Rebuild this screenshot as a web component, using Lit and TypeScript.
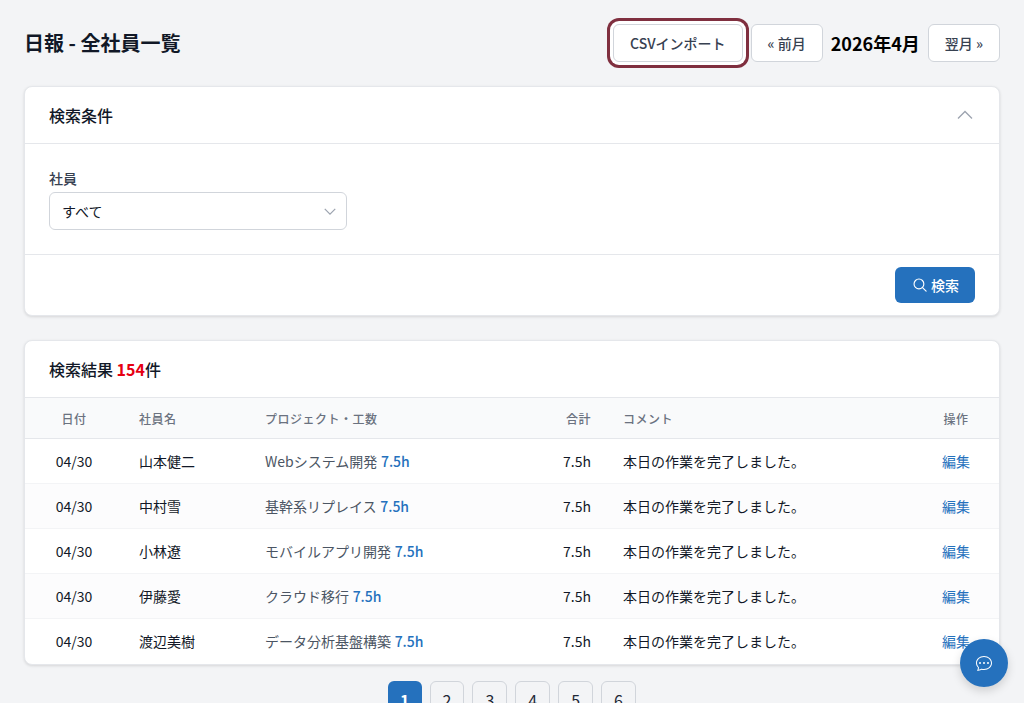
import { LitElement, css, html } from 'lit'
import { customElement } from 'lit/decorators.js'

const rows = [
  { date: '04/30', name: '山本健二', project: 'Webシステム開発', hours: '7.5h' },
  { date: '04/30', name: '中村雪', project: '基幹系リプレイス', hours: '7.5h' },
  { date: '04/30', name: '小林遼', project: 'モバイルアプリ開発', hours: '7.5h' },
  { date: '04/30', name: '伊藤愛', project: 'クラウド移行', hours: '7.5h' },
  { date: '04/30', name: '渡辺美樹', project: 'データ分析基盤構築', hours: '7.5h' },
]

@customElement('app-root')
export class AppRoot extends LitElement {
  static styles = css`
    :host {
      display: block;
      min-height: 703px;
      background: #f3f4f6;
      color: #111827;
      font-family: "Noto Sans CJK JP", "Noto Sans", sans-serif;
      font-size: 14px;
    }
    .page {
      display: flex;
      flex-direction: column;
      gap: 24px;
      padding: 24px;
    }
    .top {
      display: flex;
      align-items: center;
      justify-content: space-between;
    }
    h1 {
      margin: 0;
      font-size: 20px;
      line-height: 38px;
      font-weight: 700;
      color: #111827;
    }
    .actions {
      display: flex;
      align-items: center;
      gap: 8px;
    }
    .btn {
      display: flex;
      align-items: center;
      height: 38px;
      box-sizing: border-box;
      padding: 0 16px;
      border: 1px solid #d1d5db;
      border-radius: 6px;
      background: #fff;
      color: #374151;
      font-size: 14px;
      font-weight: 500;
    }
    .focused {
      box-shadow: 0 0 0 3px #fff, 0 0 0 6px #7f2f3f;
    }
    .month {
      font-size: 18px;
      font-weight: 700;
      color: #000;
    }
    .card {
      background: #fff;
      border: 1px solid #e5e7eb;
      border-radius: 8px;
      box-shadow: 0 1px 3px rgba(0, 0, 0, 0.12);
      overflow: hidden;
    }
    .card-head {
      display: flex;
      align-items: center;
      justify-content: space-between;
      height: 56px;
      padding: 0 24px;
      font-size: 16px;
      font-weight: 500;
      color: #111827;
      border-bottom: 1px solid #e5e7eb;
    }
    .chev-up {
      width: 16px;
      height: 16px;
      margin-right: 2px;
      color: #9ca3af;
    }
    .card-body {
      padding: 24px;
      border-bottom: 1px solid #e5e7eb;
    }
    .label {
      font-size: 14px;
      font-weight: 500;
      line-height: 20px;
      color: #374151;
      margin-bottom: 4px;
    }
    .select {
      display: flex;
      align-items: center;
      justify-content: space-between;
      box-sizing: border-box;
      width: 298px;
      height: 38px;
      padding: 0 9px 0 12px;
      border: 1px solid #d1d5db;
      border-radius: 6px;
      font-size: 14px;
      color: #111827;
    }
    .select svg {
      width: 14px;
      height: 14px;
      color: #9ca3af;
    }
    .card-foot {
      display: flex;
      justify-content: flex-end;
      padding: 12px 24px;
    }
    .primary {
      display: flex;
      align-items: center;
      gap: 4px;
      height: 36px;
      padding: 0 16px 0 18px;
      border-radius: 6px;
      background: #2571bd;
      color: #fff;
      font-size: 14px;
      font-weight: 500;
    }
    .primary svg {
      width: 14px;
      height: 14px;
    }
    .count {
      color: #e60012;
      font-weight: 700;
    }
    table {
      width: 100%;
      table-layout: fixed;
      border-collapse: collapse;
    }
    .c-date { width: 98px; }
    .c-name { width: 126px; }
    .c-project { width: 265px; }
    .c-total { width: 93px; }
    .c-ops { width: 86px; }
    th {
      height: 40px;
      padding: 0 16px;
      background: #f9fafb;
      border-bottom: 1px solid #e5e7eb;
      color: #6b7280;
      font-size: 12px;
      font-weight: 500;
      letter-spacing: 0.5px;
      text-align: left;
    }
    td {
      height: 45px;
      box-sizing: border-box;
      padding: 0 16px;
      border-bottom: 1px solid #f3f4f6;
      color: #111827;
      font-size: 14px;
    }
    tbody tr:last-child td {
      border-bottom: none;
    }
    tbody tr:nth-child(even) td {
      background: #fcfcfd;
    }
    .center { text-align: center; }
    .right { text-align: right; }
    td.project { color: #4b5563; }
    .hours {
      margin-left: 0.5px;
      color: #2571bd;
      font-weight: 500;
    }
    .edit { color: #2571bd; }
    .pager {
      display: flex;
      justify-content: center;
      gap: 8px;
      margin-top: -8px;
    }
    .page-btn {
      display: flex;
      align-items: center;
      height: 38px;
      box-sizing: border-box;
      padding: 0 12px;
      border: 1px solid #d1d5db;
      border-radius: 6px;
      font-size: 16px;
      color: #1f2937;
    }
    .page-btn.on {
      border: none;
      background: #2571bd;
      color: #fff;
      font-weight: 700;
    }
    .fab {
      position: fixed;
      right: 16px;
      bottom: 16px;
      width: 48px;
      height: 48px;
      display: flex;
      align-items: center;
      justify-content: center;
      border-radius: 50%;
      background: #2571bd;
      color: #fff;
      box-shadow: 0 4px 10px rgba(0, 0, 0, 0.15);
    }
    .fab svg {
      width: 16px;
      height: 16px;
    }
  `

  render() {
    return html`
      <div class="page">
        <div class="top">
          <h1>日報 - 全社員一覧</h1>
          <div class="actions">
            <div class="btn focused">CSVインポート</div>
            <div class="btn">« 前月</div>
            <div class="month">2026年4月</div>
            <div class="btn">翌月 »</div>
          </div>
        </div>

        <div class="card">
          <div class="card-head">
            <span>検索条件</span>
            <svg class="chev-up" viewBox="0 0 16 16" fill="none" stroke="currentColor" stroke-width="1.3">
              <path d="M1 11.5 8 4.5l7 7" />
            </svg>
          </div>
          <div class="card-body">
            <div class="label">社員</div>
            <div class="select">
              <span>すべて</span>
              <svg viewBox="0 0 16 16" fill="none" stroke="currentColor" stroke-width="1.4">
                <path d="M2 5.5 8 11.5l6-6" />
              </svg>
            </div>
          </div>
          <div class="card-foot">
            <div class="primary">
              <svg viewBox="0 0 16 16" fill="none" stroke="currentColor" stroke-width="1.3" stroke-linecap="round">
                <circle cx="6.8" cy="6.8" r="5.6" />
                <path d="M10.9 10.9 15 15" />
              </svg>
              検索
            </div>
          </div>
        </div>

        <div>
          <div class="card">
            <div class="card-head">
              <span>検索結果 <span class="count">154</span>件</span>
            </div>
            <table>
              <colgroup>
                <col class="c-date" />
                <col class="c-name" />
                <col class="c-project" />
                <col class="c-total" />
                <col />
                <col class="c-ops" />
              </colgroup>
              <thead>
                <tr>
                  <th class="center">日付</th>
                  <th>社員名</th>
                  <th>プロジェクト・工数</th>
                  <th class="right">合計</th>
                  <th>コメント</th>
                  <th class="center">操作</th>
                </tr>
              </thead>
              <tbody>
                ${rows.map(
                  (r) => html`
                    <tr>
                      <td class="center">${r.date}</td>
                      <td>${r.name}</td>
                      <td class="project">${r.project} <span class="hours">${r.hours}</span></td>
                      <td class="right">${r.hours}</td>
                      <td>本日の作業を完了しました。</td>
                      <td class="center"><span class="edit">編集</span></td>
                    </tr>
                  `
                )}
              </tbody>
            </table>
          </div>
        </div>

        <div class="pager">
          <div class="page-btn on">1</div>
          ${[2, 3, 4, 5, 6].map((n) => html`<div class="page-btn">${n}</div>`)}
        </div>
      </div>

      <div class="fab">
        <svg viewBox="0 0 16 16" fill="currentColor">
          <path d="M5 8a1 1 0 1 1-2 0 1 1 0 0 1 2 0m4 0a1 1 0 1 1-2 0 1 1 0 0 1 2 0m3 1a1 1 0 1 0 0-2 1 1 0 0 0 0 2" />
          <path d="m2.165 15.803.02-.004c1.83-.363 2.948-.842 3.468-1.105A9 9 0 0 0 8 15c4.418 0 8-3.134 8-7s-3.582-7-8-7-8 3.134-8 7c0 1.76.743 3.37 1.97 4.6a10.4 10.4 0 0 1-.524 2.318l-.003.011a11 11 0 0 1-.244.637c-.079.186.074.394.273.362a22 22 0 0 0 .693-.125m.8-3.108a1 1 0 0 0-.287-.801C1.618 10.83 1 9.468 1 8c0-3.192 3.004-6 7-6s7 2.808 7 6-3.004 6-7 6a8 8 0 0 1-2.088-.272 1 1 0 0 0-.711.074c-.387.196-1.24.57-2.634.893a11 11 0 0 0 .398-2" />
        </svg>
      </div>
    `
  }
}
